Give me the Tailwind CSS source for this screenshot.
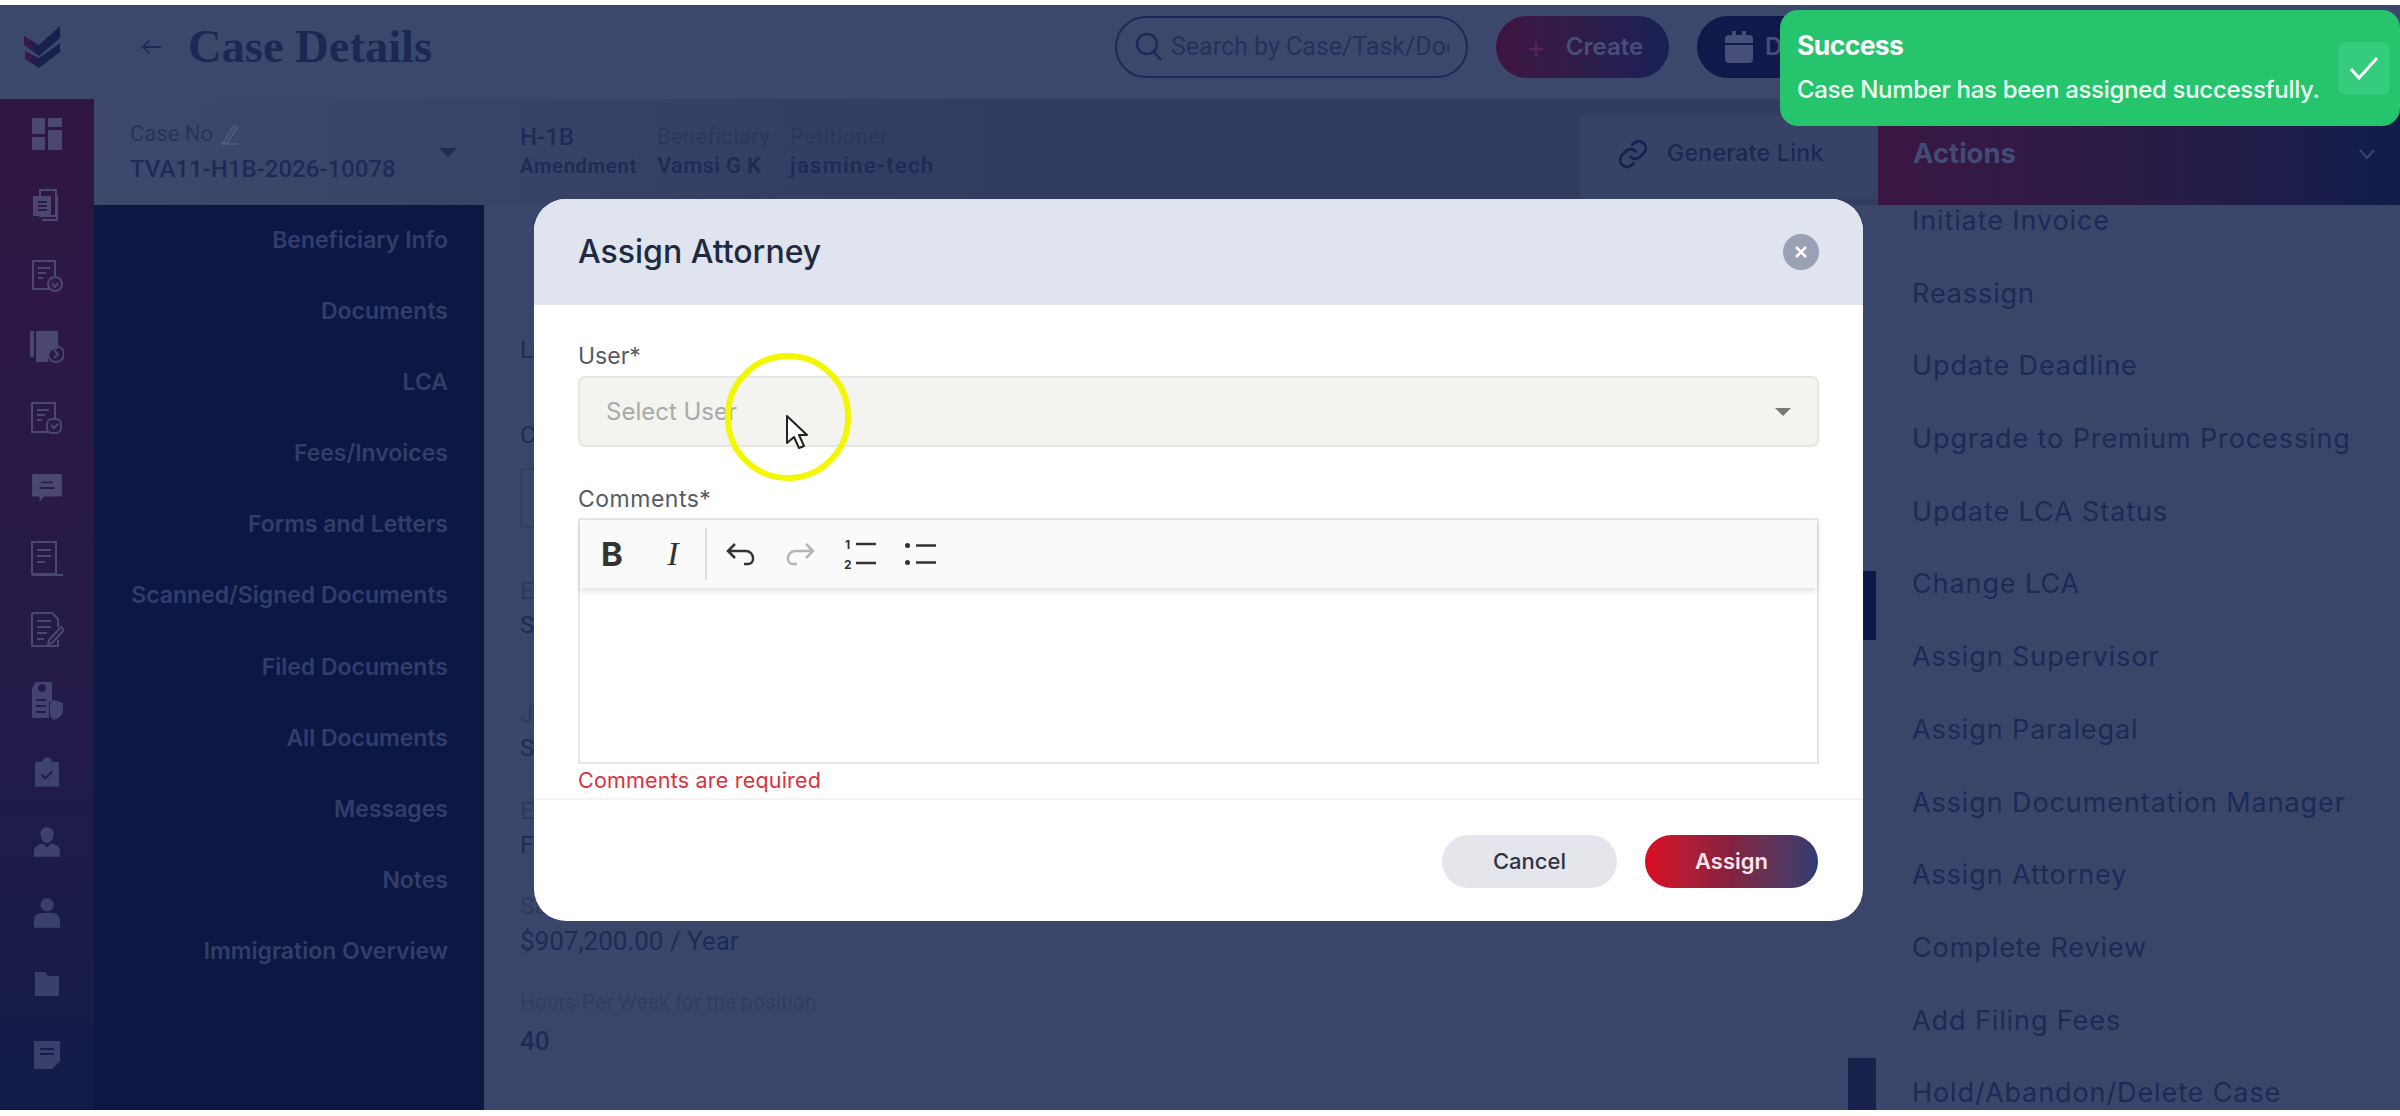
<!DOCTYPE html>
<html lang="en">
  <head>
    <meta charset="UTF-8" />
    <title>Case Details</title>
    <script src="https://cdn.jsdelivr.net/npm/@tailwindcss/browser@4"></script>
  </head>
  <body class="relative w-[2400px] h-[1116px] overflow-hidden bg-white font-['Inter',sans-serif]">
    <div class="h-[5px]"></div>
    <div class="h-[1105px] flex flex-col bg-[#3a4669]">
      <!-- top bar -->
      <header class="h-[94px] shrink-0 flex items-center pb-[10px] bg-[#3c486b]">
        <div class="w-[84px] flex justify-center">
          <svg class="w-[37px] h-[42px]" viewBox="0 0 37 42">
            <defs>
              <linearGradient id="logo" x1="0" x2="1" y1="0" y2="0">
                <stop offset="0" stop-color="#3d1747" />
                <stop offset="0.45" stop-color="#16214d" />
              </linearGradient>
            </defs>
            <path d="M0 10 L15 19 L36 0 L36 12 L15 30 L0 19 Z" fill="url(#logo)" />
            <path d="M1 25 L15 32 L36 17 L36 26 L15 42 L1 33 Z" fill="url(#logo)" />
          </svg>
        </div>
        <svg class="ml-[55px] w-[24px] h-[20px] text-[#1f2b56]" viewBox="0 0 26 22" fill="none" stroke="currentColor" stroke-width="2">
          <path d="M24 11H4M11 4l-7 7 7 7" />
        </svg>
        <h1 class="ml-[25px] font-['Liberation_Serif',serif] font-bold text-[46.5px] leading-none text-[#1a2853]">Case Details</h1>
        <div class="ml-auto w-[353px] h-[62px] rounded-full border-2 border-[#1b2a58] flex items-center pl-[18px] overflow-hidden">
          <svg class="w-[28px] h-[30px] shrink-0 text-[#1b2a58]" viewBox="0 0 28 30" fill="none" stroke="currentColor" stroke-width="2.5">
            <circle cx="12" cy="12" r="10" /><path d="M19 20l7 8" />
          </svg>
          <input class="ml-[8px] w-[278px] font-['Roboto',sans-serif] text-[25px] bg-transparent placeholder:text-[#24315b]" placeholder="Search by Case/Task/Document" />
        </div>
        <div class="ml-[28px] w-[173px] h-[62px] rounded-full bg-linear-to-r from-[#3f1540] to-[#182055] flex items-center pl-[30px]">
          <span class="text-[30px] leading-none text-[#582456]">+</span>
          <span class="ml-[20px] text-[24px] font-semibold text-[#474e78]">Create</span>
        </div>
        <div class="ml-[28px] mr-[480px] w-[223px] h-[62px] rounded-full bg-[#0d1a4a] flex items-center pl-[28px]">
          <svg class="w-[28px] h-[32px] text-[#474e78]" viewBox="0 0 28 32" fill="currentColor">
            <path d="M7 0h4v4h6V0h4v4h3a4 4 0 0 1 4 4v4H0V8a4 4 0 0 1 4-4h3zM0 14h28v14a4 4 0 0 1-4 4H4a4 4 0 0 1-4-4z" />
          </svg>
          <span class="ml-[12px] text-[24px] font-semibold text-[#474e78]">Date</span>
        </div>
      </header>

      <div class="flex-1 flex min-h-0">
        <!-- icon rail -->
        <nav class="w-[94px] shrink-0 bg-linear-to-b from-[#301645] via-[#261a48] to-[#121c48] grid grid-rows-[repeat(14,70.8px)] place-items-center content-start text-[#4a4772]">
          <svg class="w-[30px] h-[32px]" viewBox="0 0 30 32" fill="currentColor"><path d="M0 0h13v16H0zM16 0h14v9H16zM16 12h14v20H16zM0 19h13v13H0z" /></svg>
          <svg class="w-[30px] h-[32px]" viewBox="0 0 30 32" fill="none" stroke="currentColor" stroke-width="2"><path d="M8 1h16v26H8zM25 6v25H10" /><path d="M2 8h16v18H2z" fill="currentColor" /><path d="M6 13h9M6 17h9M6 21h9" stroke="#2d1a4a" /></svg>
          <svg class="w-[32px] h-[32px]" viewBox="0 0 32 32" fill="none" stroke="currentColor" stroke-width="2"><path d="M2 1h22v28H2zM7 8h12M7 13h8M7 18h5" /><circle cx="24" cy="24" r="7" fill="#2d1a4a" /><path d="M21 23l3 4 3-4" /></svg>
          <svg class="w-[34px] h-[32px]" viewBox="0 0 34 32" fill="currentColor"><path d="M0 0h4v26H0zM6 0h22v18a9 9 0 0 0-9 13H6z" /><circle cx="26" cy="23" r="8" fill="none" stroke="currentColor" stroke-width="2" /><path d="M24 19l4 4-4 4" fill="none" stroke="currentColor" stroke-width="2" /></svg>
          <svg class="w-[32px] h-[32px]" viewBox="0 0 32 32" fill="none" stroke="currentColor" stroke-width="2"><path d="M1 1h23v29H1zM6 8h12M6 13h8M6 18h5" /><rect x="16" y="17" width="14" height="14" rx="5" fill="#2a1a49" /><path d="M20 23l3 3 4-4" /></svg>
          <svg class="w-[32px] h-[28px]" viewBox="0 0 32 30" fill="currentColor"><path d="M0 0h32v24H13l-5 6v-6H0z" /><path d="M10 9h12M8 15h16" stroke="#281a49" stroke-width="2" /></svg>
          <svg class="w-[34px] h-[36px]" viewBox="0 0 34 36" fill="none" stroke="currentColor" stroke-width="2"><path d="M2 1h24v32H2zM7 9h14M7 15h14M7 21h8M2 34h31" /></svg>
          <svg class="w-[34px] h-[36px]" viewBox="0 0 34 36" fill="none" stroke="currentColor" stroke-width="2"><path d="M2 1h20l6 6v8M28 28v6H2V1M7 9h14M7 15h14M7 21h10M7 27h7" /><path d="M19 28l12-13 3 3-12 13-4 1z" /></svg>
          <svg class="w-[34px] h-[38px] text-[#424370]" viewBox="0 0 34 38" fill="currentColor"><path d="M6 0h16v20h-3v16H2V6zM12 2a4 4 0 1 0 .1 0" /><path d="M24 18l9 3v7c0 5-4 8-9 10-4-2-4-5-4-10v-7z" /><path d="M6 18h10M6 24h10M6 30h10" stroke="#241b4a" stroke-width="2" /></svg>
          <svg class="w-[24px] h-[30px] text-[#3e426e]" viewBox="0 0 26 32" fill="currentColor"><path d="M2 5h6a5 5 0 0 1 10 0h6a2 2 0 0 1 2 2v23a2 2 0 0 1-2 2H2a2 2 0 0 1-2-2V7a2 2 0 0 1 2-2z" /><path d="M7 19l4 4 8-8" fill="none" stroke="#201b49" stroke-width="2" /></svg>
          <svg class="w-[26px] h-[30px] text-[#3c416d]" viewBox="0 0 28 32" fill="currentColor"><path d="M14 0a7 7 0 0 1 7 8c0 5-3 9-7 9s-7-4-7-9a7 7 0 0 1 7-8zM0 32v-6c0-5 5-8 10-8l4 4 4-4c5 0 10 3 10 8v6z" /></svg>
          <svg class="w-[26px] h-[30px] text-[#3a406c]" viewBox="0 0 28 32" fill="currentColor"><circle cx="14" cy="7" r="7" /><path d="M0 32v-8c0-5 4-8 9-8h10c5 0 9 3 9 8v8z" /></svg>
          <svg class="w-[26px] h-[24px] text-[#39406c]" viewBox="0 0 26 24" fill="currentColor"><path d="M1 0h10l3 4h11v19a1 1 0 0 1-1 1H1z" /></svg>
          <svg class="w-[26px] h-[28px] text-[#39406c]" viewBox="0 0 26 28" fill="currentColor"><path d="M0 0h26v20l-8 8H0z" /><path d="M6 8h14M6 13h14" stroke="#161d49" stroke-width="2" /></svg>
        </nav>

        <div class="w-[1784px] shrink-0 flex flex-col">
          <!-- case summary -->
          <div class="h-[106px] shrink-0 flex bg-linear-to-r from-[#3d486c] via-[#323c60] to-[#323c60]">
            <div class="w-[390px] shrink-0 pl-[36px] pt-[20px] flex relative">
              <div class="font-['Roboto',sans-serif] text-[#1d2b58]">
                <div class="text-[22px] leading-[30px] text-[#27345e] flex items-center gap-[8px]">Case No
                  <svg class="w-[18px] h-[22px] text-[#505c85]" viewBox="0 0 18 22" fill="none" stroke="currentColor" stroke-width="1.5"><path d="M2 20L13 3l3 2L6 20zM0 21h17" /></svg>
                </div>
                <div class="mt-[5px] text-[24px] leading-[30px] font-medium">TVA11-H1B-2026-10078</div>
              </div>
              <div class="absolute left-[345px] top-[49px] w-0 h-0 border-x-[9px] border-x-transparent border-t-[9px] border-t-[#1d2b58]"></div>
            </div>
            <div class="pl-[36px] pt-[23px] font-['Roboto',sans-serif] text-[#1d2b58] flex">
              <div class="w-[137px]">
                <div class="text-[24px] leading-[30px] font-medium">H-1B</div>
                <div class="text-[20px] leading-[28px] font-semibold tracking-[0.8px]">Amendment</div>
              </div>
              <div class="w-[133px]">
                <div class="text-[21.5px] leading-[30px] text-[#2a375f] tracking-[0.6px]">Beneficiary</div>
                <div class="text-[22px] leading-[28px] font-semibold tracking-[0.3px]">Vamsi G K</div>
              </div>
              <div>
                <div class="text-[21.5px] leading-[30px] text-[#2a375f] tracking-[0.6px]">Petitioner</div>
                <div class="text-[22px] leading-[28px] font-semibold tracking-[1.3px]">jasmine-tech</div>
              </div>
            </div>
            <div class="ml-auto mt-[17px] mb-[6px] w-[298px] bg-[#374366] flex items-center gap-[17px] pl-[36px] pb-[8px]">
              <svg class="w-[34px] h-[36px] text-[#14224f]" viewBox="0 0 24 24" fill="none" stroke="currentColor" stroke-width="2" stroke-linecap="round">
                <path d="M10 14a5 5 0 0 0 7 0l3-3a5 5 0 0 0-7-7l-1.5 1.5" />
                <path d="M14 10a5 5 0 0 0-7 0l-3 3a5 5 0 0 0 7 7l1.5-1.5" />
              </svg>
              <span class="text-[23px] font-medium text-[#1a2853] tracking-[0.3px]">Generate Link</span>
            </div>
          </div>

          <div class="flex-1 flex min-h-0">
            <!-- document nav -->
            <nav class="w-[390px] shrink-0 bg-[#0b1843] flex flex-col items-end pr-[36px] pt-[20px] gap-[41.1px] font-semibold text-[23px] leading-[30px] text-[#323e69]">
              <a>Beneficiary Info</a>
              <a>Documents</a>
              <a>LCA</a>
              <a>Fees/Invoices</a>
              <a>Forms and Letters</a>
              <a>Scanned/Signed Documents</a>
              <a>Filed Documents</a>
              <a>All Documents</a>
              <a>Messages</a>
              <a>Notes</a>
              <a>Immigration Overview</a>
            </nav>
            <!-- lca details, mostly behind the dialog -->
            <div class="flex-1 relative pl-[36px] pt-[128px] font-['Roboto',sans-serif] text-[#1d2b58] text-[24px]">
              <p class="leading-[34px]">LCA</p>
              <p class="mt-[51px] leading-[34px]">Case</p>
              <div class="mt-[16px] w-[400px] h-[60px] border-2 border-[#323e64] rounded"></div>
              <p class="mt-[47px] leading-[33px] text-[#2c3960]">Employer</p>
              <p class="leading-[34px]">Software</p>
              <p class="mt-[56px] leading-[33px] text-[#2c3960]">Job Title</p>
              <p class="leading-[34px]">Software</p>
              <p class="mt-[30px] leading-[33px] text-[#2c3960]">Employment</p>
              <p class="leading-[34px]">Full Time</p>
              <p class="mt-[28px] leading-[33px] text-[#2c3960]">Salary</p>
              <p class="mt-[1px] text-[26px] leading-[34px]">$907,200.00 / Year</p>
              <p class="mt-[29px] text-[21px] leading-[30px] text-[#303c63]">Hours Per Week for the position</p>
              <p class="mt-[7px] text-[26px] leading-[34px] font-medium">40</p>
              <div class="absolute right-[2px] top-[366px] w-[13px] h-[69px] bg-[#0d1947]"></div>
              <div class="absolute right-[2px] bottom-0 w-[28px] h-[52px] bg-[#18214c]"></div>
            </div>
          </div>
        </div>

        <!-- actions -->
        <aside class="w-[522px] shrink-0 flex flex-col">
          <div class="h-[106px] shrink-0 bg-linear-to-r from-[#3a1742] to-[#111d4a] flex items-center pl-[35px] pr-[24px] pt-[3px] justify-between">
            <span class="text-[27.5px] font-bold text-[#434b77]">Actions</span>
            <svg class="w-[18px] h-[12px] text-[#3a4570]" viewBox="0 0 18 12" fill="none" stroke="currentColor" stroke-width="2"><path d="M2 2l7 8 7-8" /></svg>
          </div>
          <ul class="pl-[34px] flex flex-col gap-[35.7px] text-[27px] leading-[37px] tracking-[0.9px] text-[#1b2a56] whitespace-nowrap">
            <li class="-mt-[3px]">Initiate Invoice</li>
            <li>Reassign</li>
            <li>Update Deadline</li>
            <li>Upgrade to Premium Processing</li>
            <li>Update LCA Status</li>
            <li>Change LCA</li>
            <li>Assign Supervisor</li>
            <li>Assign Paralegal</li>
            <li>Assign Documentation Manager</li>
            <li>Assign Attorney</li>
            <li>Complete Review</li>
            <li>Add Filing Fees</li>
            <li>Hold/Abandon/Delete Case</li>
          </ul>
        </aside>
      </div>
    </div>

    <!-- assign attorney dialog -->
    <div class="absolute left-[534px] top-[199px] w-[1329px] h-[722px] bg-white rounded-[32px] overflow-hidden flex flex-col">
      <div class="h-[106px] shrink-0 bg-[#dfe4ee] flex items-center justify-between px-[44px]">
        <h2 class="text-[32px] font-medium text-[#1f2a40]">Assign Attorney</h2>
        <div class="w-[36px] h-[36px] rounded-full bg-[#99a2b5] flex items-center justify-center">
          <svg class="w-[14px] h-[14px] text-white" viewBox="0 0 14 14" fill="none" stroke="currentColor" stroke-width="2.5"><path d="M2 2l10 10M12 2L2 12" /></svg>
        </div>
      </div>
      <div class="flex-1 px-[44px] pt-[34px]">
        <label class="block text-[23px] leading-[34px] text-[#555b66]">User*</label>
        <div class="mt-[3px] h-[71px] bg-[#f3f3f0] border-2 border-[#e6e6e2] rounded-[7px] flex items-center justify-between pl-[26px] pr-[26px]">
          <span class="text-[24px] text-[#a8a9a8]">Select User</span>
          <div class="w-0 h-0 border-x-[8px] border-x-transparent border-t-[8px] border-t-[#777]"></div>
        </div>
        <label class="block mt-[35px] text-[23px] leading-[34px] tracking-[0.5px] text-[#555b66]">Comments*</label>
        <div class="mt-[2px] h-[246px] border-2 border-[#e6e6e6] flex flex-col">
          <div class="relative h-[68px] shrink-0 bg-[#fafafa] shadow-[0_3px_6px_rgba(0,0,0,0.12)] flex items-center text-[#333]">
            <span class="ml-[19px] w-[26px] font-bold text-[33px] leading-none text-center">B</span>
            <span class="ml-[35px] w-[26px] font-['Liberation_Serif',serif] italic text-[34px] leading-none text-center">I</span>
            <div class="ml-[19px] w-[2px] h-[52px] bg-[#ddd]"></div>
            <svg class="ml-[19px] w-[30px] h-[24px]" viewBox="0 0 30 24" fill="none" stroke="#333" stroke-width="2.5"><path d="M9 2L2 9l7 7M2 9h18a7 7 0 0 1 7 7v1a5 5 0 0 1-5 5h-4" /></svg>
            <svg class="ml-[29px] w-[30px] h-[24px]" viewBox="0 0 30 24" fill="none" stroke="#b5b5b5" stroke-width="2.5"><path d="M21 2l7 7-7 7M28 9H10a7 7 0 0 0-7 7v1a5 5 0 0 0 5 5h4" /></svg>
            <svg class="ml-[29px] w-[34px] h-[32px]" viewBox="0 0 34 32" fill="none" stroke="#333"><path d="M12 6h20M12 25h20" stroke-width="2.5" /><text x="1" y="11" font-family="Inter" font-size="12" font-weight="700" fill="#333" stroke="none">1</text><text x="0" y="31" font-family="Inter" font-size="12" font-weight="700" fill="#333" stroke="none">2</text></svg>
            <svg class="ml-[26px] w-[32px] h-[24px]" viewBox="0 0 32 24" fill="none" stroke="#333" stroke-width="2.5"><circle cx="3.5" cy="3.5" r="2.5" fill="#333" stroke="none" /><circle cx="3.5" cy="20.5" r="2.5" fill="#333" stroke="none" /><path d="M12 3.5h20M12 20.5h20" /></svg>
          </div>
          <div class="flex-1 bg-white"></div>
        </div>
        <p class="mt-[2px] text-[21.5px] leading-[28px] tracking-[0.2px] text-[#d93240]">Comments are required</p>
      </div>
      <div class="h-[123px] shrink-0 border-t-2 border-[#f3f3f3] flex items-start justify-end gap-[28px] px-[45px] pt-[35px]">
        <button class="w-[175px] h-[53px] rounded-full bg-[#e4e6ec] text-[22px] font-medium text-[#2d3446]">Cancel</button>
        <button class="w-[173px] h-[53px] rounded-full bg-linear-to-r from-[#dc0a20] via-[#84203f] to-[#2f3a72] text-[22px] font-semibold text-[#fbe4ea]">Assign</button>
      </div>
    </div>

    <!-- cursor highlight -->
    <div class="absolute left-[725px] top-[353px] w-[126px] h-[128px] rounded-full border-[6px] border-[#f3f800]"></div>
    <svg class="absolute left-[785px] top-[414px] w-[24px] h-[36px]" viewBox="0 0 24 36">
      <path d="M2 2v27l7-6 5 11 5-2-5-11h8z" fill="#fff" stroke="#222" stroke-width="2" stroke-linejoin="round" />
    </svg>

    <!-- toast -->
    <div class="absolute left-[1780px] top-[10px] w-[620px] h-[116px] rounded-[18px] bg-[#27c46e] flex items-center pl-[17px] pr-[10px] text-white">
      <div class="flex-1">
        <p class="-mt-[3px] text-[26.5px] leading-[34px] font-bold tracking-[-0.6px]">Success</p>
        <p class="mt-[12px] text-[24px] leading-[32px] font-medium text-[#ecfff4] tracking-[-0.3px] whitespace-nowrap">Case Number has been assigned successfully.</p>
      </div>
      <div class="w-[52px] h-[53px] rounded-[8px] bg-[#35cc7d] flex items-center justify-center">
        <svg class="w-[30px] h-[24px]" viewBox="0 0 30 24" fill="none" stroke="#fff" stroke-width="3"><path d="M2 13l8 9L28 2" /></svg>
      </div>
    </div>
  </body>
</html>
